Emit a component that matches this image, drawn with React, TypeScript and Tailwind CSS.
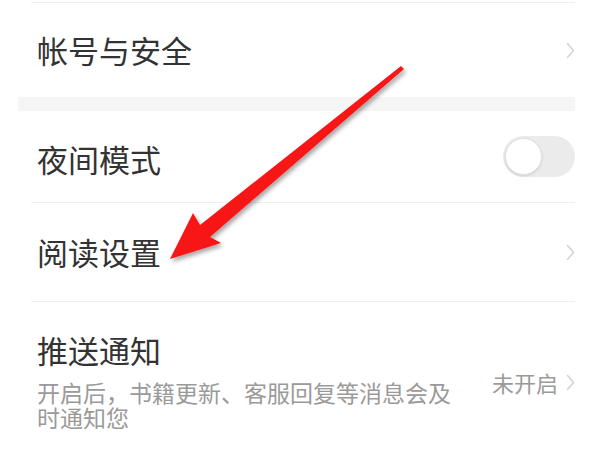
import React from "react";

function Chevron() {
  return (
    <svg width="9" height="17" viewBox="0 0 9 17" className="shrink-0">
      <polyline points="1.5,1.5 7.5,8.5 1.5,15.5" fill="none" stroke="#d4d4d4" strokeWidth="1.6" strokeLinecap="round" strokeLinejoin="round" />
    </svg>
  );
}

export default function App() {
  return (
    <div
      className="relative w-[600px] h-[455px] bg-white overflow-hidden"
      style={{ fontFamily: '"Noto Sans CJK SC", "Noto Sans", sans-serif' }}
    >
      <div className="mt-[2px] ml-[31px] mr-[25px] h-px bg-[#eeeeee]" />
      {/* Row 1 */}
      <div className="ml-[37px] mr-[25px] h-[94px] flex items-center justify-between">
        <span className="text-[31px] leading-[40px] text-[#333333]">帐号与安全</span>
        <Chevron />
      </div>
      <div className="ml-[18px] mr-[25px] h-[14px] bg-[#f5f5f5]" />
      {/* Row 2 */}
      <div className="ml-[37px] mr-[25px] h-[91px] flex items-center justify-between">
        <span className="text-[31px] leading-[40px] text-[#333333] pt-[5px]">夜间模式</span>
        <div className="w-[72px] h-[41px] rounded-full bg-[#ebebeb] flex items-center px-[2px]">
          <div className="w-[37px] h-[37px] rounded-full bg-white border border-[#e2e2e2] shadow-sm" />
        </div>
      </div>
      <div className="ml-[31px] mr-[25px] h-px bg-[#eeeeee]" />
      {/* Row 3 */}
      <div className="ml-[37px] mr-[25px] h-[98px] flex items-center justify-between">
        <span className="text-[31px] leading-[40px] text-[#333333]">阅读设置</span>
        <Chevron />
      </div>
      <div className="ml-[31px] mr-[25px] h-px bg-[#eeeeee]" />
      {/* Row 4 */}
      <div className="ml-[37px] mr-[25px] flex justify-between">
        <div className="pt-[28px]">
          <div className="text-[31px] leading-[40px] text-[#333333]">推送通知</div>
          <div className="mt-[10px] w-[416px] text-[23px] leading-[25px] text-[#9a9a9a]">
            开启后，书籍更新、客服回复等消息会及时通知您
          </div>
        </div>
        <div className="pt-[67px] flex items-center gap-[8px] h-fit">
          <span className="text-[22px] leading-[26px] text-[#9a9a9a]">未开启</span>
          <Chevron />
        </div>
      </div>

      {/* Red arrow overlay */}
      <svg className="absolute left-0 top-0 pointer-events-none" width="600" height="455" viewBox="0 0 600 455">
        <defs>
          <filter id="sh" x="-20%" y="-20%" width="140%" height="140%">
            <feDropShadow dx="2" dy="3" stdDeviation="2" floodColor="#000" floodOpacity="0.35" />
          </filter>
          <linearGradient id="rg" x1="0" y1="0" x2="1" y2="1">
            <stop offset="0" stopColor="#ff2a2a" />
            <stop offset="1" stopColor="#f00000" />
          </linearGradient>
        </defs>
        <polygon
          points="401,66 200,225 193,213 170,259 221,243 210,237 404,69"
          fill="url(#rg)"
          filter="url(#sh)"
        />
      </svg>
    </div>
  );
}
